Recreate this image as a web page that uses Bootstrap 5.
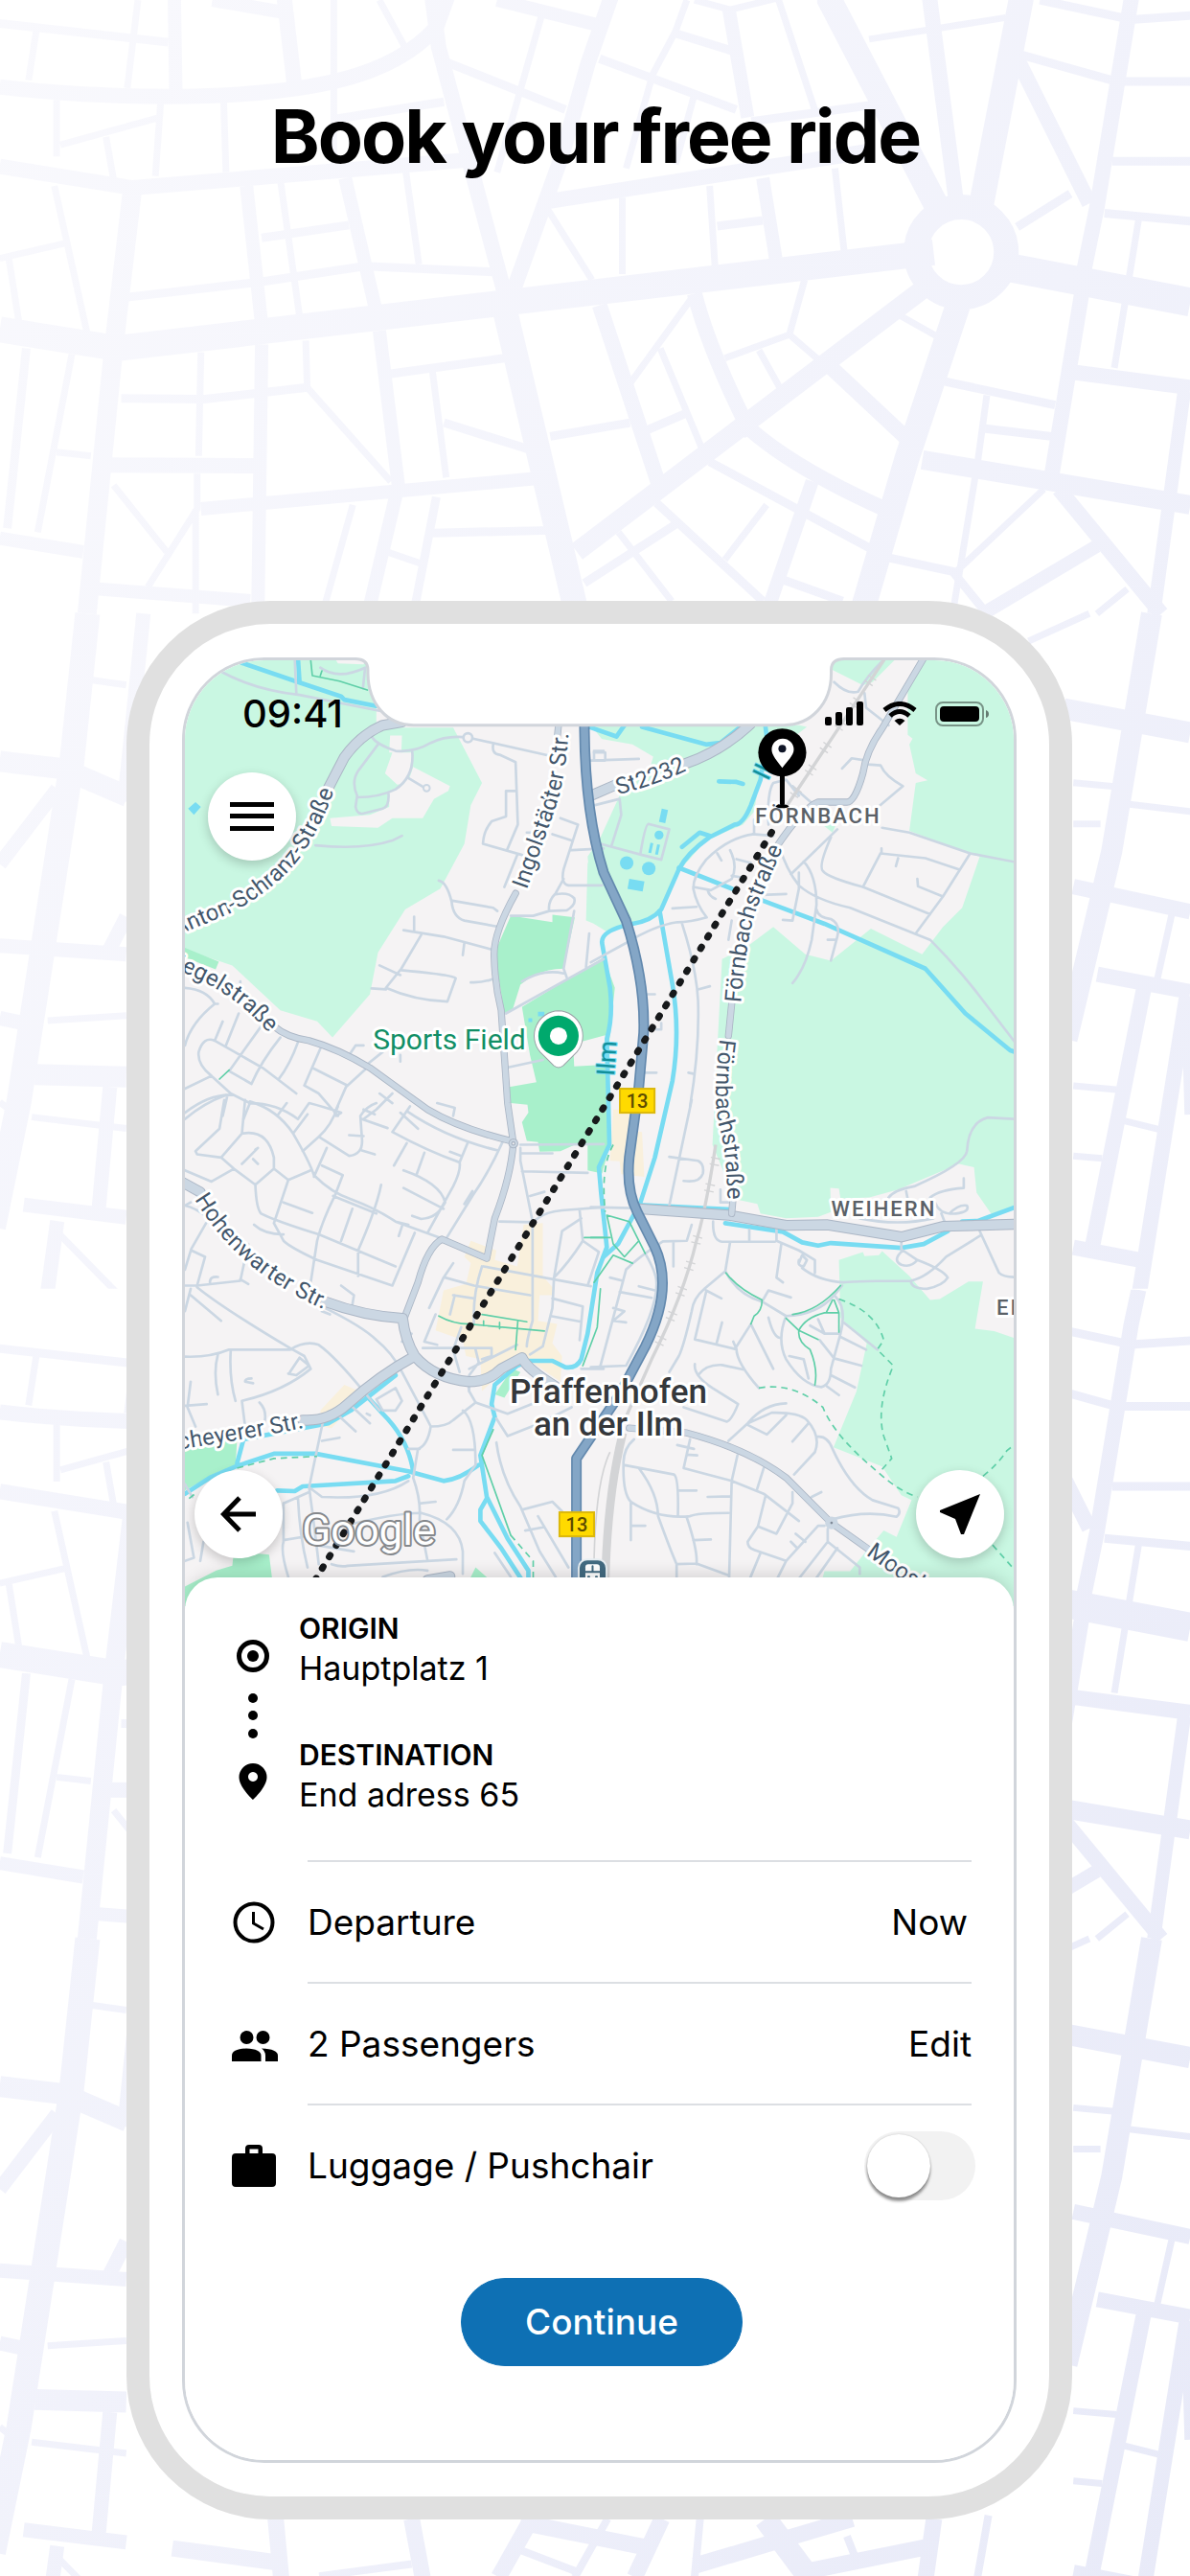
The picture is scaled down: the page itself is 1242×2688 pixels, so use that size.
<!DOCTYPE html>
<html lang="en">
<head>
<meta charset="utf-8">
<meta name="viewport" content="width=device-width, initial-scale=1">
<title>Book your free ride</title>
<link href="https://cdn.jsdelivr.net/npm/bootstrap@5.3.0/dist/css/bootstrap.min.css" rel="stylesheet">
<style>
  body { font-family: Inter, "Liberation Sans", sans-serif; color: #000; background: #fff; }
  .stage { min-height: 100vh; overflow: hidden; padding: 0 123px 60px 132px; }
  .streets { inset: 0; width: 100%; height: 100%; z-index: 0; }
  .streets path, .streets circle { fill: none; stroke: #fff; vector-effect: non-scaling-stroke; }
  .headline { font-size: 77px; line-height: 96px; font-weight: 700; letter-spacing: -2px; padding: 94px 8px 0 0; margin: 0 0 437px; }
  .phone { background: #fff; border: 24px solid #e0e0e0; border-radius: 150px; padding: 35px 34px; }
  .screen { border: 3px solid #d1d5db; border-radius: 86px; overflow: hidden; background: #fff; }
  .notch { top: 0; left: 0; width: 100%; z-index: 3; pointer-events: none; }
  .map-layer { inset: 0 0 50px 0; }
  .status { padding: 32px 25px 0 60px; font-size: 40px; line-height: 48px; font-weight: 500; }
  .status-icons { gap: 19px; }
  .round-btn { width: 92px; height: 92px; background: #fff; box-shadow: 0 4px 12px rgba(0,0,0,.2); }
  .round-btn:hover, .round-btn:active { background: #f6f6f6 !important; }
  .menu-slot { padding: 37px 24px 0; }
  .map-foot { padding: 0 10px; }
  .sheet { margin-top: -30px; border-radius: 34px 34px 0 0; background: #fff; padding: 33px 44px 98px 49px; box-shadow: 0 -4px 16px rgba(0,0,0,.12); }
  .icon-col { width: 46px; flex: none; }
  .trip { gap: 26px; padding-bottom: 46px; }
  .trip-icons { width: 44px; padding-top: 31px; }
  .stops { display: grid; gap: 48px; }
  .stop { margin: 0; }
  .stop dt { font-size: 30px; line-height: 40px; font-weight: 600; }
  .stop dd { font-size: 34px; line-height: 44px; margin: 0; }
  .option { gap: 33px; font-size: 37px; line-height: 44px; }
  .option-body { border-top: 2px solid #dcdfe3; min-height: 127px; }
  .plain-btn { font-size: 37px; line-height: 44px; color: #000; }
  .toggle { width: 116px !important; height: 72px; margin: 0 -4px 0 0 !important; border: 0; border-radius: 36px !important; background: #f2f2f2 !important; position: relative; }
  .toggle::before { content: ""; position: absolute; left: 3px; top: 3px; width: 66px; height: 66px; border-radius: 50%; background: #fff; box-shadow: 0 4px 3px rgba(0,0,0,.4), 0 0 2px rgba(0,0,0,.2); }
  .toggle:checked { background: #0e70b4 !important; }
  .toggle:checked::before { left: auto; right: 3px; }
  .go-btn { --bs-btn-bg: #0e70b4; --bs-btn-border-color: #0e70b4; --bs-btn-color: #fff; --bs-btn-hover-bg: #0b5f99; --bs-btn-hover-color: #fff; font-size: 37px; line-height: 44px; font-weight: 500; padding: 23px 66px; margin-top: 55px; }

  .city { font-family: Roboto, "Liberation Sans", sans-serif; }
  .city path, .city polyline { fill: none; stroke-linejoin: round; stroke-linecap: round; }
  .city .park { fill: #c9f7e2; } .city .wood { fill: #a8f0cb; }
  .city .land { fill: #f5f3f4; } .city .shops { fill: #f9f0dc; }
  .city .river { stroke: #78dcf2; stroke-width: 14; }
  .city .lane { stroke: #cbd7e3; stroke-width: 8; }
  .city .edge { stroke: #abb6c5; } .city .fillr { stroke: #cbd7e3; }
  .city .t20 { stroke-width: 22; } .city .t18 { stroke-width: 17; }
  .city .t32 { stroke-width: 34; } .city .t28 { stroke-width: 28; }
  .city .hwedge { stroke: #6389ae; stroke-width: 33; } .city .hw { stroke: #84a6c6; stroke-width: 23; }
  .city .rail { stroke: #d3d4d6; stroke-width: 10; stroke-linecap: butt; }
  .city .ties { stroke: #d3d4d6; stroke-width: 30; stroke-dasharray: 4 16 4 60; stroke-linecap: butt; }
  .city .trail { stroke: #5fcfa8; stroke-width: 5; }
  .city .dash { stroke-dasharray: 20 15; stroke-linecap: butt; }
  .city text { paint-order: stroke; stroke: #fff; stroke-width: 6px; stroke-linejoin: round; }
  .city .street { font-size: 24px; fill: #42566b; }
  .city .quarter { font-size: 22px; font-weight: 500; fill: #5b6167; letter-spacing: 2px; }
  .city .town { font-size: 35px; font-weight: 500; fill: #35383c; text-anchor: middle; }
  .city .poi { font-size: 30px; fill: #128f66; text-anchor: end; }
  .city .stream { font-size: 26px; fill: #118f9b; stroke: #78dcf2; stroke-width: 2px; }
  .city .shield { font-size: 20px; font-weight: 500; fill: #5d4c00; stroke: none; text-anchor: middle; }
  .city .brand { font-size: 44px; fill: #fff; stroke: #85888c; stroke-width: 4px; }
</style>
</head>
<body>
<main class="stage position-relative">

  <svg class="streets position-absolute" viewBox="0 0 1242 2688" preserveAspectRatio="xMidYMin slice" aria-hidden="true">
    <defs>
      <linearGradient id="haze" x1="0" y1="0" x2="1" y2="1"><stop offset="0" stop-color="#f9f9fd"/><stop offset=".5" stop-color="#f1f2fb"/><stop offset="1" stop-color="#e8eaf8"/></linearGradient>
      <clipPath id="upper"><rect x="0" y="-37" width="1242" height="1381"/></clipPath>
      <g id="tile" clip-path="url(#upper)">
        <g transform="scale(.7921 .4082)">
          <path stroke-width="27" d="M0 842 L155 890 L1230 645"/>
          <path stroke-width="30" d="M1320 680 L1568 772"/>
          <path stroke-width="26" d="M1093 -90 V0 L1235 530 M1345 -90 V0 L1292 530 M665 790 L760 1568 M1262 780 L1195 1170 L1135 1568"/>
          <path stroke-width="20" d="M175 480 L150 890 L115 1568 M1215 740 L760 1410 M1215 1175 L1568 1290"/>
          <path stroke-width="16" d="M0 222 Q100 245 220 247 C420 245 520 190 575 70 L605 -90 M0 425 L175 480 L620 408 M720 515 L1150 385 M372 -90 L375 0 L388 215 M570 -90 V0 L578 120 L665 750 M675 750 L740 400 L775 160 L820 -90 M1225 -90 V0 L1260 520 M1340 150 L1435 520 M1500 -90 L1490 0 L1445 530 L1428 690 M1090 930 L1200 1130 M990 1100 Q1050 1200 1165 1300 M915 750 Q935 900 990 1110 M790 780 L870 1250 M1425 750 L1385 1220 M1395 1250 L1530 1568 M140 1188 L335 1190 M1410 950 L1568 990"/>
          <path stroke-width="14" d="M230 -90 V0 L232 240 M280 0 L385 35 M655 0 L790 65 M960 20 L985 300 M325 475 L345 830 M455 455 L495 790 M345 880 L340 1568 M500 845 L525 1240 L485 1568 M265 1300 L710 1222 M130 1505 L330 1535 M1070 1230 L1010 1568 M1445 1395 L1295 1568 M0 1375 L110 1410 M1005 455 L1022 660 M1560 1000 L1520 1568"/>
          <path stroke-width="9" d="M0 60 L222 108 M590 160 L745 280 M790 150 L970 280 M890 85 L965 130 M990 310 L1150 268 M1345 140 L1470 208 L1568 208 M1370 0 L1490 50 L1568 40 M1465 412 H1568 M1455 545 L1568 565 M1340 580 L1410 495 M1245 975 L1390 1035 M1298 1095 L1385 1115 M1170 1425 L1255 1460 L1300 1568 M440 305 L585 260 M165 760 L345 720 L480 680 L650 695 M345 608 L460 575 M945 578 L1005 563 M160 1018 L270 1020 L405 990 M515 955 L665 915 M585 1080 L700 1150 M570 1362 L725 1355 M725 1115 L830 1080 M845 1105 L905 1055 M575 1270 L545 1568 M935 1180 L1150 1405 M865 1285 L1005 1536 M890 1340 L770 1490 M1030 1480 L1110 1536 M35 890 L10 1350"/>
          <path stroke-width="7" d="M182 0 L168 225 M48 80 L38 205 M440 0 V440 M500 0 L535 125 M715 30 L655 440 M905 0 L890 80 L860 190 L825 430 M915 240 L890 420 M915 0 L962 25 L1025 -5 L1075 290 M1145 100 L1325 45 M75 255 V400 M80 370 L210 300 M140 350 L150 460 M212 260 L205 450 M295 260 L298 440 M72 475 L115 850 M0 660 L90 620 M12 660 L25 820 M370 465 L395 810 M535 440 L552 675 M720 530 L780 715 M820 505 V700 M935 475 L942 680 M1100 430 L1112 640 M1500 560 L1468 940 M1300 1010 L1288 1180 M1375 1250 L1260 1460 M1285 1215 L1255 1568 M1485 1505 L1445 1568 M1180 800 L1235 860 M1060 715 L1040 855 L955 915 M1040 855 L1085 930 M1000 895 L1030 1000 M912 760 L830 980 M870 890 L930 1170 M1010 1290 L955 1430 M815 1360 L885 1536 M95 905 L50 1360 M75 1155 L120 1165 M265 900 L262 1165 M403 870 L405 990 L515 1230 M570 950 L588 1220 M150 1240 L220 1410 M260 1210 V1300 L195 1500 M258 1300 V1568 M465 1290 L425 1568 M510 1410 L555 1440"/>
        </g>
        <circle cx="1003" cy="263" r="47" stroke-width="26"/>
        <g transform="translate(0 640) scale(.3333 1.3062)">
          <path stroke-width="26" d="M275 0 L225 120 L60 390 L-20 490"/>
          <path stroke-width="22" d="M0 118 L200 124 L400 146 M110 368 L396 370"/>
          <path stroke-width="15" d="M0 200 L180 140 M0 265 L396 272 M0 323 L75 327 M75 472 L396 482 M345 378 L310 475 M180 485 L145 550 M450 0 L430 50 L390 150 M340 270 L396 242"/>
          <path stroke-width="7" d="M0 390 L25 395 M150 325 L396 321 M100 402 L396 411 M185 495 L396 550 M285 53 L396 57"/>
        </g>
        <g transform="translate(1060 640) scale(.3333 1.3062)">
          <path stroke-width="22" d="M425 0 L300 190 L160 340 M150 76 L546 95"/>
          <path stroke-width="16" d="M180 218 L546 238 M255 288 L546 302 M400 300 L240 505 M180 506 L385 516 M535 305 L385 545 M542 310 L552 400"/>
          <path stroke-width="7" d="M180 135 L310 138 M180 168 H265 M350 152 L546 158 M490 238 L440 295 M180 377 L315 380 M340 405 L450 412 M180 433 L270 435 M40 22 L230 0"/>
        </g>
      </g>
      <mask id="roads" maskUnits="userSpaceOnUse" x="0" y="0" width="1242" height="2688">
        <use href="#tile"/>
        <use href="#tile" y="1382"/>
        <g transform="translate(180 2120) scale(.5676 .3622)">
          <path stroke-width="17" d="M190 1400 L200 1568 M440 1400 L460 1568 M0 1485 L190 1525 M660 1400 L600 1568 M640 1410 L880 1485 M900 1400 L850 1568 M1400 1400 L1385 1568 M960 1535 L1100 1470 L1250 1400 M1170 1550 L1390 1480"/>
          <path stroke-width="24" d="M1090 1400 L1170 1568"/>
          <path stroke-width="8" d="M640 1490 L740 1550 M800 1400 L740 1568 M970 1400 L960 1568 M1240 1450 L1260 1530 M1500 1390 L1480 1568 M270 1565 L440 1530"/>
        </g>
      </mask>
    </defs>
    <rect width="1242" height="2688" fill="url(#haze)" mask="url(#roads)"/>
  </svg>

  <h1 class="headline text-center position-relative">Book your free ride</h1>

  <div class="phone position-relative">
    <div class="position-relative">
      <svg class="notch position-absolute" viewBox="191 686 869 80" aria-hidden="true">
        <path fill="#fff" d="M373 680 V687 Q384 687 384 699 V703 C385 735 405 757 432 757 H818 C845 757 867 735 867 703 V699 Q867 687 879 687 V680Z"/>
        <path fill="none" stroke="#d1d5db" stroke-width="3" d="M371 687.500 Q384.500 687.500 384.500 699 V703 C385 735 405 756.500 432 756.500 H818 C845 756.500 867 735 867 703 V699 Q867 687.500 881 687.500"/>
      </svg>

      <div class="screen">
        <div class="position-relative">
          <svg class="city d-block w-100" viewBox="194 689 863 985" role="img" aria-label="Map of Pfaffenhofen an der Ilm">
            <rect x="190" y="680" width="880" height="1000" fill="#f5f3f4"/>
            <defs>
              <path id="p-anton" d="M120 1003 L240 953 Q290 927 315 893 Q337 860 349 825"/>
              <path id="p-ziegel" d="M150 1000 Q235 1022 281 1077"/>
              <path id="p-ingol" d="M550 928 L580 842 Q594 800 594 740"/>
              <path id="p-st" d="M645 829 Q685 819 722 801"/>
              <path id="p-foern1" d="M773 1046 Q778 980 790 945 L822 872"/>
              <path id="p-foern2" d="M751 1083 Q742 1150 752 1180 Q760 1215 758 1262"/>
              <path id="p-hohen" d="M204 1250 C235 1300 270 1335 350 1370"/>
              <path id="p-schey" d="M140 1518 Q260 1500 318 1488"/>
              <path id="p-moos" d="M903 1620 Q950 1655 1010 1690"/>
            </defs>

            <!-- land use, rivers and roads; three units to the pixel -->
            <g transform="translate(180 660) scale(.33333)">
              <path class="park" d="M0 60 H640 V297 H880 L970 470 L935 540 L915 660 L840 800 L730 865 L645 1000 L620 1130 L503 1265 L455 1215 L340 1180 L190 1040 L42 990Z"/>
              <path class="land" d="M755 420 L870 480 L865 495 L820 520 L785 580 L690 580 L645 610 L500 605 L495 580 L620 570 L680 545 V500 L740 465Z M690 375 H752 L740 470 L705 475 L667 440Z M683 322 H720 L718 375 H680Z M510 80 H610 L600 100 L520 97Z"/>
              <path class="wood" d="M42 985 L148 1028 L138 1052 L42 1015Z M1060 885 L1190 905 V882 L1260 890 L1225 1050 Q1150 1050 1090 1100 L1065 1180 L1040 1190 L1010 1000Z"/>
              <path class="wood" d="M1095 1170 L1350 1015 L1385 1110 L1370 1250 L1362 1360 L1370 1600 L1345 1690 L1300 1680 V1598 L1260 1600 L1215 1620 L1150 1622 L1145 1592 L1110 1588 L1095 1530 L1115 1500 L1112 1475 L1060 1470 L1055 1420 L1140 1405 L1120 1320Z"/>
              <path class="land" d="M1255 1285 L1355 1258 V1350 L1258 1355Z"/>
              <path class="park" d="M1300 720 L1350 690 L1370 930 L1295 900Z"/>
            </g>
            <g transform="translate(620 660) scale(.33333)">
              <path class="park" d="M-10 290 H640 L665 295 L600 345 L540 330 L520 440 L500 560 L465 600 L350 650 L270 740 L205 870 L120 915 L40 935 L0 910 L-20 700 L20 640 L75 520 L110 440Z"/>
              <path class="land" d="M-20 325 L120 350 L185 388 L170 440 L-10 500Z"/>
              <path class="park" d="M740 80 H945 L870 155 L840 165 L740 115Z"/>
              <path class="park" d="M1030 80 L980 160 V320 L995 332 L985 350 L1005 440 L1042 462 L1005 470 L985 620 L1170 690 L1205 700 L1150 860 L1090 920 L1025 1005 L865 925 L740 1025 L660 1005 L560 920 L480 980 L400 1020 L385 1300 L370 1600 L440 1770 L510 1785 L520 1815 L600 1830 L700 1825 L740 1810 L738 1735 L765 1737 L770 1768 L860 1765 L950 1740 L1140 1660 L1187 1670 L1195 1750 L1240 1815 L1330 1800 V80Z"/>
              <path class="park" d="M700 590 H760 L745 625Z"/>
            </g>
            <g transform="translate(620 1150) scale(.33333)">
              <path class="park" d="M765 490 L840 465 L845 478 L890 475 L900 462 L985 540 L1050 615 L1080 612 L1170 557 H1215 L1190 705 L1250 712 L1330 740 V1600 H680 L720 1462 H800 L850 1400 L905 1335 L945 1355 L992 1240 L960 1225 L900 1135 L748 1075 L820 900 L852 750 L770 670Z"/>
              <path class="shops" d="M60 20 H115 V85 L150 90 L157 230 L85 222 L80 182 L50 180Z"/>
            </g>
            <g transform="translate(180 1150) scale(.33333)">
              <path class="wood" d="M42 1075 L205 1050 L200 1135 L150 1150 L42 1210Z M42 1510 L140 1460 L190 1445 L195 1400 L305 1410 L315 1490 L42 1600Z M1010 910 L1065 830 L1090 840 L1040 920Z M930 1490 L950 1450 L990 1485Z"/>
              <path class="shops" d="M935 430 L1015 460 L1010 490 L1080 510 L1100 380 L1160 375 V540 L1190 575 V600 H1150 L1145 680 L1205 690 L1190 750 L1220 790 L1215 870 L1090 785 L970 900 L965 800 L920 790 L910 740 L825 710 L850 585 L920 565 L935 500 L915 480Z M465 960 L540 880 L575 895 L560 950 L500 1015 L470 1010Z"/>
            </g>

            <!-- water -->
            <g transform="translate(180 660) scale(.33333)">
              <path class="river" d="M220 95 L380 150 L530 200 L540 210 L640 230 M395 80 L400 155"/>
              <path style="fill:#78dcf2" d="M52 550 L75 530 L92 545 L70 570Z M1145 1185 h20 v14 h-20z M1115 1205 h12 v12 h-12z"/>
            </g>
            <g transform="translate(620 660) scale(.33333)">
              <path class="river" d="M-10 297 L70 325 L95 290 M150 295 L350 350 L395 345 L455 297 M535 290 L540 330 L520 460 L490 540 Q465 600 440 600 L360 640 Q290 690 265 740 L210 865 Q180 900 120 910 Q20 930 25 970 L50 1110 Q60 1200 40 1270 L45 1470 L48 1600 L15 1670 L22 1750 L40 1920 L10 2000 L-20 2190 L-40 2270 Q-55 2300 -90 2295 L-130 2275 H-200 L-240 2290 L-310 2350 L-320 2410 L-310 2450 L-355 2570 L-335 2700 L-270 2830 L-205 2930 V2970"/>
              <path class="river" d="M265 735 L430 800 M520 835 L720 910 L1035 1050 L1160 1190 L1300 1305 L1330 1315 M205 870 L245 1100 Q270 1250 245 1400 L190 1640 L145 1780 L75 1910 L30 1950"/>
              <path class="river" d="M390 465 L445 467 L465 473 M275 670 L330 625 L360 635"/>
              <g fill="#78dcf2"><circle cx="102" cy="720" r="21"/><circle cx="171" cy="737" r="21"/><circle cx="203" cy="633" r="14"/><rect x="107" y="773" width="48" height="32" transform="rotate(10 131 789)"/><rect x="207" y="552" width="20" height="42" transform="rotate(12 217 573)"/><rect x="173" y="657" width="9" height="32" transform="rotate(12 177 673)"/><rect x="194" y="662" width="9" height="32" transform="rotate(12 198 678)"/></g>
            </g>
            <g transform="translate(620 1150) scale(.33333)">
              <path class="river" d="M140 318 L430 332 M410 375 L590 402 L650 435 L700 445 L740 437 L960 452 L1030 440 L1105 400 M1150 370 L1200 368 L1330 320"/>
            </g>
            <g transform="translate(180 1150) scale(.33333)">
              <path class="river" d="M985 1235 L965 1270 V1305 L1030 1390 L1095 1490 M610 915 L660 970 Q740 1050 755 1150 M42 1220 L120 1170 L200 1135 L320 1095 H450 L740 1150 L850 1180 Q900 1175 960 1130 M330 1210 L385 1212 L410 1197 L700 1180 L740 1165 M205 1125 L225 1050 L490 1000 L560 960 L700 850"/>
            </g>

            <!-- lanes -->
            <g transform="translate(180 660) scale(.33333)">
              <path class="lane" d="M150 120 Q260 180 400 195 L650 245 M385 80 L390 190 M465 110 Q520 150 605 110 L598 175 M450 665 Q600 680 690 650 L720 635 M625 325 Q640 350 700 370 Q760 375 810 345 Q860 320 925 328 M925 328 L1180 385 M645 350 L585 430 Q560 465 580 510 L575 545 Q580 570 600 565 L660 550 Q680 545 678 505 M580 515 Q650 515 700 490 Q760 450 752 370 M740 455 L790 485"/>
              <circle cx="926" cy="329" r="14" fill="#f5f3f4" stroke="#cbd7e3" stroke-width="8"/><circle cx="797" cy="486" r="10" fill="#f5f3f4" stroke="#cbd7e3" stroke-width="6"/>
              <path class="lane" d="M1005 350 Q1000 380 1025 382 L1075 405 L1082 600 L1048 680 M1075 495 H1045 V575 L1000 590 Q975 620 973 660 L1095 695 M1080 695 L1040 795 M835 775 Q860 780 875 840 Q880 890 915 900 L1025 920 M878 838 L1005 860 L1018 870 M725 930 L850 950 L1000 990 M758 888 V935 M915 968 L910 1008 M780 945 L718 1050 L670 1110 Q760 1150 862 1153 L888 1080 Q880 1070 718 1055 M650 1040 L715 1070 M625 1112 L670 1115 M935 1093 Q970 1095 1005 1082 M1190 630 L1250 650 M1215 580 L1270 600 L1225 740 Q1215 785 1240 790 H1345 M1250 680 L1350 675 M1225 770 L1200 815 Q1175 840 1180 870 L1235 868 Q1265 850 1258 830 Q1240 810 1200 818 M1060 885 H1130 L1180 870 M1258 870 L1225 1050 L1235 1078 M1095 1090 Q1160 1050 1225 1065 M1045 1190 L1350 1020 M1305 940 L1295 1045 M1110 625 H1130 M1320 400 V370 H1350 M1045 1360 L1160 1335"/>
              <path class="lane" d="M42 1110 Q110 1115 135 1160 Q60 1220 42 1290 M135 1160 H145 M215 1090 V1110 M42 1425 L125 1385 L185 1440 L245 1470 Q330 1470 395 1520 L430 1470 Q470 1480 530 1500 L515 1510 M125 1385 Q80 1350 85 1310 Q100 1260 135 1275 L285 1360 L390 1440 M160 1215 L135 1275 M210 1190 L170 1290 M280 1230 L180 1370 L250 1410 Q280 1340 340 1265 M395 1280 Q370 1350 335 1395 M465 1300 L415 1415 M440 1360 L550 1415 M605 1365 L545 1420 L510 1500 M660 1310 L610 1350 M415 1415 L460 1440 L520 1510 M42 1500 Q120 1440 190 1445 M175 1445 L160 1510 M245 1470 L225 1520 M555 1320 L575 1290 H600 M830 1470 L885 1485 L880 1510 M690 1440 L640 1490 L600 1520 M690 1470 L650 1440 M715 1320 V1340"/>
              <path class="trail" d="M435 87 L440 135 L525 152 L612 180 M470 120 L465 135 M150 1395 L180 1367"/>
            </g>
            <g transform="translate(620 660) scale(.33333)">
              <path class="lane" d="M750 155 Q790 195 825 185 Q850 140 900 90 M845 190 L850 235 L920 290 M775 425 L805 393 L850 400 L855 412 L895 415 Q910 450 965 480 L870 560 M-10 400 L140 395 M0 375 H35 V400 M0 540 L80 520 L85 570 L55 665 M20 660 L150 695 L210 710 L235 615 L170 598 Q160 600 145 690 M620 480 L700 550 M545 600 Q540 500 560 470 L600 460 L640 510 M500 585 V630 Q420 640 350 710 Q310 760 310 800 Q320 850 352 890 M352 890 Q300 905 260 905 Q190 915 100 970 L-10 1030 M275 910 Q320 1050 325 1150 Q330 1300 300 1480 M325 1115 L362 1105 M495 630 L560 635 M425 680 Q450 730 430 770 L365 805 L310 795 M385 690 L398 712 M445 708 L490 720 M430 760 L460 765 M355 805 Q360 825 380 832 M245 862 L320 857 M760 615 L615 755 M580 670 Q600 740 640 790 Q690 835 800 860 L1050 960 Q1130 1040 1200 1130 L1315 1280 M740 640 Q700 730 715 745 Q730 765 840 795 L1050 880 M900 610 L985 625 L1175 690 L1330 720 M840 795 L895 690 L1035 705 L1140 740 M950 705 L943 730 M898 675 V690 M1175 690 L1090 825 L1005 940 M1010 770 L1012 793 L1090 825 M655 715 Q695 760 695 850 L680 960 Q660 1050 620 1095 M640 750 L640 800 L620 900 L590 898 M695 865 Q700 890 740 895 Q770 910 760 950 L740 1025 M730 960 H755 M430 900 L420 960 M525 820 L600 817 M295 1375 L310 1378 M160 1130 L190 1130 M160 1375 L195 1375 M195 1240 H210 V1220"/>
            </g>
            <g transform="translate(180 1150) scale(.33333)">
              <path class="lane" d="M42 50 Q100 0 170 -25 M165 -10 L150 80 L75 150 L80 160 L155 170 L220 95 Q300 80 320 170 V205 L262 255 L195 205 L155 170 M230 -10 L220 95 M270 140 L220 190 M262 145 L270 140 M255 175 L270 190 M42 210 L125 245 L195 205 M320 205 L365 240 L435 210 M365 240 L320 375 M262 255 Q265 330 280 345 Q330 370 460 410 L700 510 M245 -5 Q330 20 380 95 Q430 180 445 225 Q500 280 560 300 Q640 330 700 370 L850 425 M330 40 L360 0 M425 35 L380 95 M520 10 Q500 70 460 105 L410 150 M460 105 L555 165 Q600 160 595 110 L590 40 Q610 10 640 0 M555 100 L600 103 M595 50 L675 78 M595 148 L635 160 M600 20 L635 35 M745 10 L690 90 Q800 150 900 185 Q905 210 880 260 L800 405 M715 30 L770 80 M735 25 Q860 110 1020 148 M1035 120 Q990 220 940 290 L860 420 M925 125 L900 185 M790 155 L765 225 M735 125 L695 195 M870 152 L905 165 M485 140 L445 230 M470 195 L535 225 L510 290 Q470 370 455 430 L435 560 M655 255 Q640 330 583 460 V540 M725 210 Q840 250 855 310 Q830 360 780 362 L752 352 M725 265 L850 330 M940 275 L915 315 M350 310 L440 343 M565 330 L530 430 M505 290 L640 345 M720 385 L710 415 M760 405 L690 570 L455 490 Q370 450 350 430 L320 375 M700 370 L740 380 M258 380 Q290 410 350 410 M530 570 L570 600 L565 630"/>
              <path class="lane" d="M42 320 Q100 330 200 440 M42 320 L60 310 M108 375 L62 455 L42 520 M62 460 L105 480 L80 570 M42 570 H80 L215 555 L240 440 M215 550 L240 565 M80 575 Q160 640 370 765 L415 790 L435 830 Q350 900 220 930 L230 1010 M120 560 Q120 540 145 543 M60 600 L155 680 M60 580 L42 650 M42 792 Q120 795 180 770 H370 Q420 740 460 755 Q510 790 600 900 L650 960 M480 640 Q600 700 640 740 Q690 780 720 840 M145 785 Q130 840 145 910 M185 775 Q180 860 200 930 M60 870 L50 950 L75 1010 M42 945 L110 940 M370 840 L400 795 L430 820 L390 850 L365 845 M275 935 Q300 960 290 1000 M495 660 L470 650 M250 860 Q230 860 230 870 L255 875 M472 1000 L430 1200 L470 1230 Q650 1240 740 1180 M470 1055 L525 1045 M510 965 L575 1025 M545 930 L620 1000 M640 925 L700 890 L720 930 L700 960 H660Z M720 840 L800 990 L810 1010 Q800 1070 770 1080 L755 1170 Q780 1240 775 1300 L800 1430 M740 1080 H775 M810 1010 Q860 1010 880 990 L950 935 L930 900 L925 860 M910 960 Q950 990 950 1130 L915 1180 Q900 1260 860 1300 M880 1083 H945 M610 970 L620 975 M780 1250 L825 1245 M430 1200 Q450 1350 460 1440 M350 1250 L430 1215 M350 1250 L350 1370 Q340 1400 365 1480 M395 1230 Q400 1350 425 1450 M350 1365 L410 1355 M540 1320 Q700 1280 780 1280 Q900 1310 910 1400 V1470 M450 1380 L570 1400 M500 1440 Q530 1450 550 1445 L800 1430 L890 1425 M660 1480 Q740 1450 800 1460 M50 1310 L70 1420 L42 1430 M42 1190 L65 1230 M100 1370 L90 1430"/>
              <path class="lane" d="M1090 140 L1090 180 Q1120 330 1128 370 V680 Q1110 740 1110 760 M1090 130 L1350 128 M1095 213 L1300 218 M1095 157 H1190 M1120 290 L1165 277 M1025 370 L1130 372 Q1160 340 1220 335 L1350 325 M1275 335 L1285 430 Q1240 500 1195 545 M1280 360 L1220 400 L1195 545 L1190 640 L1160 760 L1120 785 M1285 430 L1335 465 L1300 570 M855 545 L945 570 L1120 600 M975 510 L1310 572 M885 600 L870 660 M880 600 L945 610 M970 510 Q940 600 945 690 M880 500 L850 545 L805 640 M825 660 L790 745 L830 755 M785 765 L1000 765 V790 L970 800 M950 770 L960 810 L930 850 V900 M930 830 L1080 755 M1190 610 L1285 635 L1275 740 M1185 665 L1280 683 M905 700 L880 770 L900 840 M950 935 L1050 970 L1150 930 M1015 985 L1050 1040 L1150 1000 L1250 950 M1015 1060 Q1030 1170 1090 1260 Q1120 1330 1150 1400 L1200 1480 M1095 1270 L1190 1245 L1220 1275 M1145 1290 L1240 1450 M1105 1335 L1160 1325 M1010 1405 L1060 1480 M1280 830 H1350 M750 720 L720 745"/>
              <path class="trail" d="M835 665 Q880 690 930 690 L1165 712 M970 660 L1110 683 M975 680 V695 M1025 685 V705 M1082 680 L1075 770 M1290 420 H1350 M1340 580 L1330 700 L1285 820 M1005 1020 L970 1100 L1060 1350"/>
              <path class="trail dash" d="M205 1140 L320 1110 L455 1103 M55 1235 L80 1215 M1060 1350 L1130 1430 V1490"/>
            </g>
            <g transform="translate(620 1150) scale(.33333)">
              <path class="lane" d="M305 -10 L235 320 M235 168 L325 180 Q345 190 340 220 Q330 250 280 243 M395 270 V310 H420 M372 370 Q370 430 400 433 H565 M485 395 V430 M570 390 V430 L640 460 L690 490 V530 M425 435 L410 525 L345 580 Q310 610 305 650 Q280 760 265 790 L235 840 M-10 325 L120 328 M305 380 L290 430 L215 432 Q140 480 100 520 L20 820 M248 432 V510 M160 470 Q195 530 195 560 Q200 640 100 820 L-10 825 M80 590 L180 608 M140 572 L190 585 M50 545 L90 555 M60 640 L95 650 L60 680 L100 685 M350 590 L315 738 L440 768 L490 690 L560 830 M350 585 L398 610 M400 685 L383 750 M435 745 L445 768 Q445 810 515 890 M410 525 Q450 600 525 620 L600 665 Q700 660 750 600 L775 570 M525 620 L545 585 L615 607 M545 670 Q560 730 580 733 M600 665 Q570 740 600 800 Q650 880 710 887 Q740 880 740 830 L770 720 Q790 640 755 605 M610 790 L655 800 L670 860 M675 695 L720 720 H765 M700 675 L720 720 M705 740 L750 797 L835 820 M770 730 L850 770 M740 850 L815 888 M780 685 L885 770 M728 885 L765 912 M585 440 L570 545 L590 560 M640 500 L650 475 L665 490 L655 510 Q635 510 640 490 M650 515 Q700 555 780 560 Q820 555 990 555 Q1040 545 1100 480 L1205 415 M990 555 Q990 580 1040 580 Q1090 570 1105 545 Q1090 520 1010 490 M960 430 V460 M965 460 L1010 490 Q990 515 960 505 Q930 490 965 460 M1205 400 L1265 530 Q1280 545 1320 543 M920 295 Q940 270 1000 260 Q1160 190 1165 150 Q1170 60 1230 45 L1320 50 M975 275 L980 300 M1050 295 Q1080 270 1155 265 V235 M1065 310 Q1080 350 1130 345 Q1175 340 1165 320 Q1140 315 1110 345 M1085 345 L1095 370 M830 360 Q950 385 1060 360"/>
              <path class="lane" d="M315 815 Q310 850 370 890 L450 940 Q430 990 415 995 L280 950 M325 850 Q350 815 400 818 L465 832 M420 1055 L480 1000 Q530 940 600 938 M480 1000 L555 967 Q640 965 665 990 Q710 1040 690 1090 L625 1160 M480 1005 L540 1035 L600 975 M670 1000 L620 1057 M700 1042 Q730 1040 745 1080 Q800 1200 870 1240 L950 1265 Q960 1280 945 1292 Q850 1270 745 1300 M125 1050 Q90 1080 92 1130 L250 1160 Q265 1170 262 1290 M92 1130 Q90 1220 115 1245 Q200 1300 300 1290 Q320 1280 420 1280 M115 1245 V1365 M140 1140 Q200 1220 200 1290 Q240 1400 258 1440 V1485 M300 1050 L280 1140 L430 1180 L530 1220 L640 1305 M260 1068 L312 1080 M290 1098 L322 1100 M448 1100 L430 1180 L422 1485 M530 1140 L508 1210 M265 1210 H320 M355 1230 L425 1228 M120 1320 H160 M290 1295 Q325 1400 320 1440 M310 1365 L365 1363 M258 1440 L320 1438 L420 1475 M535 1230 L512 1322 L480 1370 Q480 1390 500 1395 L600 1430 L700 1320 H720 M512 1322 L570 1345 L620 1250 V1215 M520 1405 L485 1490 M600 1430 L570 1490 M730 1370 L640 1485 M760 1390 L690 1490 M730 1330 V1370 L830 1450 V1470 M680 1230 L710 1215 M630 1345 L660 1370 M615 1370 L635 1390"/>
              <path class="trail" d="M412 530 Q450 580 525 615 Q525 650 500 665 L490 690 M620 660 Q700 650 770 570 M600 672 L640 710 L700 738 M640 710 Q635 745 675 770 Q700 830 690 880 M640 710 Q660 670 720 655 L765 655 V715 M745 615 L725 655 M750 615 L765 655 M40 350 L110 370 L160 470 M40 350 L60 440 L95 480 L140 430 M-10 420 H50 M0 560 L60 475 L120 500"/>
              <path class="trail dash" d="M765 612 Q880 650 905 740 L885 770 L935 820 Q880 950 905 1040 L930 1110 L890 1155 M515 890 Q620 870 715 950 Q750 1040 890 1155 Q950 1210 1010 1230 M1215 1165 Q1260 1130 1290 1085 L1320 1062 M1245 1380 L1320 1465 M60 130 Q20 200 35 340"/>
            </g>

            <!-- railway -->
            <g transform="translate(620 660) scale(.33333)">
              <path class="rail" d="M910 80 L590 560 M380 1600 Q350 1800 320 1900 Q280 2070 180 2270 L100 2450"/>
              <path class="ties" d="M870 140 L600 545 M380 1640 Q350 1800 320 1900 Q280 2070 180 2270"/>
              <path class="rail" style="stroke-width:26" d="M90 2500 Q40 2700 35 2980"/>
              <path class="rail" style="stroke-width:5" d="M50 2560 Q5 2650 0 2900"/>
            </g>

            <!-- main roads -->
            <g transform="translate(180 660) scale(.33333)">
              <path class="edge t32" d="M720 280 L660 290 Q590 320 540 390 L488 490"/><path class="fillr t28" d="M720 280 L660 290 Q590 320 540 390 L488 490"/>
              <path class="edge t20" d="M1210 280 L1205 330 M1075 815 Q1005 940 1008 1010 Q1010 1100 1030 1180 L1050 1470 L1068 1595 Q1060 1700 1010 1830 L985 1955 L845 1895 Q800 1920 770 2030 L728 2140 M320 1230 Q360 1265 430 1275 Q520 1300 620 1360 Q730 1440 800 1490 Q900 1550 1068 1590"/>
              <path class="fillr t18" d="M1210 280 L1205 330 M1075 815 Q1005 940 1008 1010 Q1010 1100 1030 1180 L1050 1470 L1068 1595 Q1060 1700 1010 1830 L985 1955 L845 1895 Q800 1920 770 2030 L728 2140 M320 1230 Q360 1265 430 1275 Q520 1300 620 1360 Q730 1440 800 1490 Q900 1550 1068 1590"/>
              <circle cx="1068" cy="1596" r="14" fill="#cbd7e3" stroke="#abb6c5" stroke-width="3"/><circle cx="1068" cy="1596" r="5" fill="#f5f3f4" stroke="#abb6c5" stroke-width="4"/>
            </g>
            <g transform="translate(180 1150) scale(.33333)">
              <path class="edge t32" d="M30 245 L90 278 M480 620 Q600 665 722 672 Q730 740 760 790 Q820 860 930 870 Q990 870 1030 830 L1095 795 Q1110 830 1200 885 M410 990 Q490 995 550 940 Q650 850 760 790 M800 1490 L870 1478"/>
              <path class="fillr t28" d="M30 245 L90 278 M480 620 Q600 665 722 672 Q730 740 760 790 Q820 860 930 870 Q990 870 1030 830 L1095 795 Q1110 830 1200 885 M410 990 Q490 995 550 940 Q650 850 760 790 M800 1490 L870 1478"/>
            </g>
            <g transform="translate(620 660) scale(.33333)">
              <path class="edge t32" d="M490 285 Q400 370 285 410 M70 475 L-10 510 M140 1800 L420 1820 L600 1852 L730 1850 L960 1888 L1090 1855 L1330 1848"/>
              <path class="fillr t28" d="M490 285 Q400 370 285 410 M70 475 L-10 510 M140 1800 L420 1820 L600 1852 L730 1850 L960 1888 L1090 1855 L1330 1848"/>
              <path class="edge t20" d="M1030 80 L900 300 Q850 370 840 440 Q815 530 790 530 H700 Q650 550 570 670 M430 1160 L420 1260 M435 1760 L430 1815 M110 2485 L290 2500 Q480 2550 600 2640 Q700 2740 740 2780 L860 2865"/>
              <path class="fillr t18" d="M1030 80 L900 300 Q850 370 840 440 Q815 530 790 530 H700 Q650 550 570 670 M430 1160 L420 1260 M435 1760 L430 1815 M110 2485 L290 2500 Q480 2550 600 2640 Q700 2740 740 2780 L860 2865"/>
              <circle cx="742" cy="2781" r="20" fill="#cbd7e3"/><circle cx="742" cy="2781" r="4" fill="#7f8a97"/>
            </g>
            <g transform="translate(180 660) scale(.33333)">
              <path class="hwedge" d="M1290 280 Q1290 560 1350 750 L1420 900 Q1480 1090 1475 1250 L1460 1420 L1430 1640 Q1420 1740 1455 1810 L1510 1920 Q1570 2050 1480 2230 L1400 2380 L1265 2580 V3050"/>
              <path class="hw" d="M1290 280 Q1290 560 1350 750 L1420 900 Q1480 1090 1475 1250 L1460 1420 L1430 1640 Q1420 1740 1455 1810 L1510 1920 Q1570 2050 1480 2230 L1400 2380 L1265 2580 V3050"/>
            </g>

            <!-- street names -->
            <text class="street"><textPath href="#p-anton" startOffset="100%" text-anchor="end">Anton-Schranz-Straße</textPath></text>
            <text class="street"><textPath href="#p-ziegel" startOffset="100%" text-anchor="end">Ziegelstraße</textPath></text>
            <text class="street"><textPath href="#p-ingol">Ingolstädter Str.</textPath></text>
            <text class="street"><textPath href="#p-st">St2232</textPath></text>
            <text class="street"><textPath href="#p-foern1">Förnbachstraße</textPath></text>
            <text class="street"><textPath href="#p-foern2">Förnbachstraße</textPath></text>
            <text class="street"><textPath href="#p-hohen">Hohenwarter Str.</textPath></text>
            <text class="street"><textPath href="#p-schey" startOffset="100%" text-anchor="end">Scheyerer Str.</textPath></text>
            <text class="street"><textPath href="#p-moos">Moosburger</textPath></text>
            <text class="stream" transform="translate(641 1122) rotate(-86)">Ilm</text>
            <text class="stream" transform="translate(801 815) rotate(-65)">Ilm</text>

            <!-- places -->
            <text class="quarter" x="788" y="859">FÖRNBACH</text>
            <text class="quarter" x="867" y="1268">WEIHERN</text>
            <text class="quarter" x="1039" y="1370">EI</text>
            <text class="town" x="635" y="1462">Pfaffenhofen</text>
            <text class="town" x="635" y="1496">an der Ilm</text>
            <text class="poi" x="549" y="1094">Sports Field</text>
            <path style="fill:#fff;stroke:#9aa0a6;stroke-width:1" d="M583 1054 a26 26 0 0 1 19 43 L588 1111 Q583 1115 578 1111 L564 1097 A26 26 0 0 1 583 1054Z"/>
            <circle cx="583" cy="1080" r="21" fill="#00a96d"/><circle cx="583" cy="1080" r="9" fill="#fff"/>
            <rect x="647" y="1135" width="36" height="25" fill="#ffda00" stroke="#dcb80a" stroke-width="2"/><text class="shield" x="665" y="1155">13</text>
            <rect x="584" y="1576" width="36" height="25" fill="#ffda00" stroke="#dcb80a" stroke-width="2"/><text class="shield" x="602" y="1596">13</text>
            <rect x="604" y="1625" width="29" height="32" rx="9" fill="#426a80" stroke="#e7eef2" stroke-width="2"/><rect x="611" y="1630" width="15" height="18" rx="3" fill="#fff"/><path style="stroke:#426a80;stroke-width:2" d="M611 1638 h15 M618.500 1632 v6 M614 1643 h1 M622 1643 h1"/>

            <!-- planned trip -->
            <path style="stroke:#17191b;stroke-width:7;stroke-dasharray:2 12" d="M805 868 L328 1649"/>
            <text class="brand" x="316" y="1610">Google</text>
            <path style="stroke:#000;stroke-width:5" d="M816 808 V838"/><ellipse cx="816" cy="841" rx="7" ry="2" fill="#000"/>
            <circle cx="816" cy="785" r="25" fill="#000"/>
            <path style="fill:#fff" d="M816 801 C811 794 805 788 805 782 A11.500 11.500 0 0 1 828 782 C828 788 821 794 816 801Z"/><circle cx="816" cy="781" r="4" fill="#0f1526"/>
          </svg>

          <div class="map-layer position-absolute d-flex flex-column">
            <div class="status d-flex justify-content-between align-items-center">
              <span>09:41</span>
              <span class="status-icons d-flex align-items-center">
                <svg width="41" height="26" viewBox="0 0 41 26" aria-label="Signal"><rect x="0" y="16" width="7" height="9" rx="2"/><rect x="11" y="11" width="7" height="14" rx="2"/><rect x="22" y="6" width="7" height="19" rx="2"/><rect x="33" y="0" width="7" height="25" rx="2"/></svg>
                <svg width="36" height="26" viewBox="0 0 36 26" fill="none" stroke="#000" stroke-width="5" aria-label="Wi-Fi"><path d="M2 9 Q18 -4 34 9"/><path d="M8 15 Q18 6 28 15"/><path stroke="none" fill="#000" d="M18 25 L12.500 20 Q18 15.500 23.500 20Z"/></svg>
                <svg width="57" height="26" viewBox="0 0 57 26" aria-label="Battery"><rect x="1" y="1" width="49" height="24" rx="7" fill="none" stroke="#000" stroke-opacity=".4" stroke-width="2"/><rect x="5" y="5" width="41" height="16" rx="4"/><path fill-opacity=".5" d="M53 9 Q56 10 56 13 Q56 16 53 17Z"/></svg>
              </span>
            </div>
            <div class="menu-slot">
              <button type="button" class="btn round-btn rounded-circle border-0 p-0 d-flex align-items-center justify-content-center" aria-label="Menu">
                <svg width="46" height="32" viewBox="0 0 46 32"><path d="M0 1h46v5H0zM0 13h46v5H0zM0 26h46v5H0z"/></svg>
              </button>
            </div>
            <div class="map-foot mt-auto d-flex justify-content-between">
              <button type="button" class="btn round-btn rounded-circle border-0 p-0 d-flex align-items-center justify-content-center" aria-label="Back">
                <svg width="38" height="38" viewBox="0 0 38 38" fill="none" stroke="#000" stroke-width="5"><path d="M37 19H4M20 2L3.500 19 20 36"/></svg>
              </button>
              <button type="button" class="btn round-btn rounded-circle border-0 p-0 d-flex align-items-center justify-content-center" aria-label="My location">
                <svg width="42" height="42" viewBox="0 0 42 42"><path d="M42 0 L0 17 V19 L16 26 L22 42 H25Z"/></svg>
              </button>
            </div>
          </div>
        </div>

        <section class="sheet position-relative">
          <div class="trip d-flex">
            <div class="trip-icons text-center flex-shrink-0">
              <svg class="d-block mx-auto" width="36" height="170" viewBox="0 0 36 170" aria-hidden="true">
                <circle cx="18" cy="18" r="14.500" fill="none" stroke="#000" stroke-width="5"/><circle cx="18" cy="18" r="6"/>
                <circle cx="18" cy="62" r="5"/><circle cx="18" cy="80" r="5"/><circle cx="18" cy="99" r="5"/>
                <path transform="translate(3 130)" fill-rule="evenodd" d="M15 0 A14.500 14.500 0 0 1 29.500 14.500 C29.500 25 15 38 15 38 C15 38 .5 25 .5 14.500 A14.500 14.500 0 0 1 15 0Z M15 9 a5 5 0 1 0 .01 0Z"/>
              </svg>
            </div>
            <div class="stops flex-grow-1">
              <dl class="stop"><dt>ORIGIN</dt><dd>Hauptplatz 1</dd></dl>
              <dl class="stop"><dt>DESTINATION</dt><dd>End adress 65</dd></dl>
            </div>
          </div>

          <div class="option d-flex align-items-center">
            <span class="icon-col text-center"><svg width="44" height="44" viewBox="0 0 44 44" fill="none" stroke="#000" stroke-width="4" aria-hidden="true"><circle cx="22" cy="22" r="19.500"/><path stroke-width="3" d="M21.500 11 V23 L32 29"/></svg></span>
            <div class="option-body flex-grow-1 d-flex justify-content-between align-items-center"><span>Departure</span><button type="button" class="btn plain-btn border-0 py-0 px-1">Now</button></div>
          </div>
          <div class="option d-flex align-items-center">
            <span class="icon-col text-center"><svg width="48" height="32" viewBox="0 0 48 32" aria-hidden="true"><circle cx="15.500" cy="7" r="7"/><circle cx="32.500" cy="7" r="7"/><path d="M0 32 V26 Q0 19 15 18.500 Q30.500 19 30.500 26 V32Z M35 32 V26 Q35 21.500 31 18.500 Q48 19 48 26 V32Z"/></svg></span>
            <div class="option-body flex-grow-1 d-flex justify-content-between align-items-center"><span>2 Passengers</span><button type="button" class="btn plain-btn border-0 p-0">Edit</button></div>
          </div>
          <div class="option d-flex align-items-center">
            <span class="icon-col text-center"><svg width="46" height="44" viewBox="0 0 46 44" aria-hidden="true"><path fill-rule="evenodd" d="M4 9 H14 V4 Q14 0 18 0 H28 Q32 0 32 4 V9 H42 Q46 9 46 13 V40 Q46 44 42 44 H4 Q0 44 0 40 V13 Q0 9 4 9Z M18.500 4.500 V9 H27.500 V4.500Z"/></svg></span>
            <div class="option-body flex-grow-1 form-switch d-flex justify-content-between align-items-center p-0"><label for="luggage">Luggage / Pushchair</label><input class="form-check-input toggle shadow-none" type="checkbox" role="switch" id="luggage"></div>
          </div>

          <div class="text-center"><button type="button" class="btn go-btn rounded-pill">Continue</button></div>
        </section>
      </div>
    </div>
  </div>
</main>
<script src="https://cdn.jsdelivr.net/npm/bootstrap@5.3.0/dist/js/bootstrap.bundle.min.js"></script>
</body>
</html>
